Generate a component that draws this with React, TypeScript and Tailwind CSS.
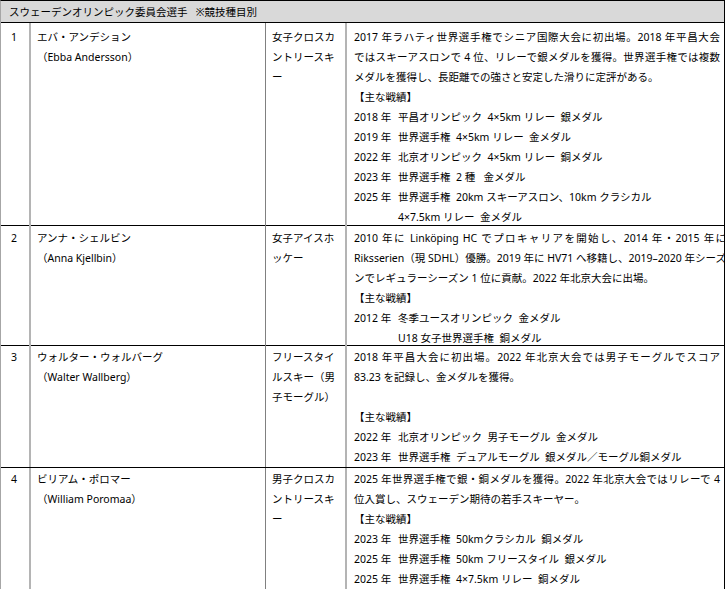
import React from "react";

type Line = { t: string; j?: boolean; year?: string; indent?: boolean; blank?: boolean };

type Row = {
  no: string;
  jp: string;
  en: string;
  sport: string[];
  lines: Line[];
  h: string;
  pt: string;
};

const rows: Row[] = [
  {
    no: "1",
    jp: "エバ・アンデション",
    en: "（Ebba Andersson）",
    sport: ["女子クロスカ", "ントリースキ", "ー"],
    h: "h-[203px]",
    pt: "pt-[4px]",
    lines: [
      { t: "2017 年ラハティ世界選手権でシニア国際大会に初出場。2018 年平昌大会", j: true },
      { t: "ではスキーアスロンで 4 位、リレーで銀メダルを獲得。世界選手権では複数", j: true },
      { t: "メダルを獲得し、長距離での強さと安定した滑りに定評がある。" },
      { t: "【主な戦績】" },
      { year: "2018 年", t: "平昌オリンピック  4×5km リレー  銀メダル" },
      { year: "2019 年", t: "世界選手権  4×5km リレー  金メダル" },
      { year: "2022 年", t: "北京オリンピック  4×5km リレー  銅メダル" },
      { year: "2023 年", t: "世界選手権  2 種   金メダル" },
      { year: "2025 年", t: "世界選手権  20km スキーアスロン、10km クラシカル" },
      { indent: true, t: "4×7.5km リレー  金メダル" },
    ],
  },
  {
    no: "2",
    jp: "アンナ・シェルビン",
    en: "（Anna Kjellbin）",
    sport: ["女子アイスホ", "ッケー"],
    h: "h-[120px]",
    pt: "pt-[2px]",
    lines: [
      { t: "2010 年に Linköping HC でプロキャリアを開始し、2014 年・2015 年に", j: true },
      { t: "Riksserien（現 SDHL）優勝。2019 年に HV71 へ移籍し、2019–2020 年シーズ", j: true },
      { t: "ンでレギュラーシーズン 1 位に貢献。2022 年北京大会に出場。" },
      { t: "【主な戦績】" },
      { year: "2012 年", t: "冬季ユースオリンピック  金メダル" },
      { indent: true, t: "U18 女子世界選手権  銅メダル" },
    ],
  },
  {
    no: "3",
    jp: "ウォルター・ウォルバーグ",
    en: "（Walter Wallberg）",
    sport: ["フリースタイ", "ルスキー（男", "子モーグル）"],
    h: "h-[122px]",
    pt: "pt-[1px]",
    lines: [
      { t: "2018 年平昌大会に初出場。2022 年北京大会では男子モーグルでスコア", j: true },
      { t: "83.23 を記録し、金メダルを獲得。" },
      { blank: true, t: "" },
      { t: "【主な戦績】" },
      { year: "2022 年", t: "北京オリンピック  男子モーグル  金メダル" },
      { year: "2023 年", t: "世界選手権  デュアルモーグル  銀メダル／モーグル銅メダル" },
    ],
  },
  {
    no: "4",
    jp: "ビリアム・ポロマー",
    en: "（William Poromaa）",
    sport: ["男子クロスカ", "ントリースキ", "ー"],
    h: "h-[121px]",
    pt: "pt-[1px]",
    lines: [
      { t: "2025 年世界選手権で銀・銅メダルを獲得。2022 年北京大会ではリレーで 4", j: true },
      { t: "位入賞し、スウェーデン期待の若手スキーヤー。" },
      { t: "【主な戦績】" },
      { year: "2023 年", t: "世界選手権  50kmクラシカル  銅メダル" },
      { year: "2025 年", t: "世界選手権  50km フリースタイル  銀メダル" },
      { year: "2025 年", t: "世界選手権  4×7.5km リレー  銅メダル" },
    ],
  },
];

function TextLine({ l }: { l: Line }) {
  if (l.blank) return <div className="h-[20px]" />;
  if (l.year)
    return (
      <div className="flex whitespace-pre">
        <span className="w-[44px] shrink-0">{l.year}</span>
        <span>{l.t}</span>
      </div>
    );
  if (l.indent) return <div className="pl-[44px] whitespace-pre">{l.t}</div>;
  if (l.j)
    return (
      <div className="whitespace-nowrap text-justify [text-align-last:justify] [text-justify:inter-character]">
        {l.t}
      </div>
    );
  return <div className="whitespace-pre">{l.t}</div>;
}

export default function App() {
  return (
    <div className="w-[725px] h-[589px] bg-white text-black text-[10.5px] leading-[20px] font-['Noto_Sans','Noto_Sans_CJK_JP',sans-serif] overflow-hidden">
      <div className="border-t border-r border-black border-l border-l-[#a6a6a6] border-b">
        <div className="h-[22px] bg-[#d9d9d9] border-b border-black pl-[8px] flex items-center whitespace-pre">
          スウェーデンオリンピック委員会選手   ※競技種目別
        </div>
        {rows.map((r, i) => (
          <div
            key={r.no}
            className={`grid grid-cols-[30px_235px_81px_1fr] ${r.h} ${i < rows.length - 1 ? "border-b border-black" : ""}`}
          >
            <div className={`border-r-2 border-[#b4b4b4] pl-[10px] ${r.pt}`}>{r.no}</div>
            <div className={`border-r border-[#808080] pl-[6px] ${r.pt}`}>
              <div className="whitespace-nowrap">{r.jp}</div>
              <div>{r.en}</div>
            </div>
            <div className={`border-r-2 border-[#b4b4b4] pl-[6px] ${r.pt}`}>
              {r.sport.map((s, k) => (
                <div key={k} className="whitespace-nowrap">
                  {s}
                </div>
              ))}
            </div>
            <div className={`pl-[7px] pr-[4px] ${r.pt}`}>
              {r.lines.map((l, k) => (
                <TextLine key={k} l={l} />
              ))}
            </div>
          </div>
        ))}
      </div>
    </div>
  );
}
